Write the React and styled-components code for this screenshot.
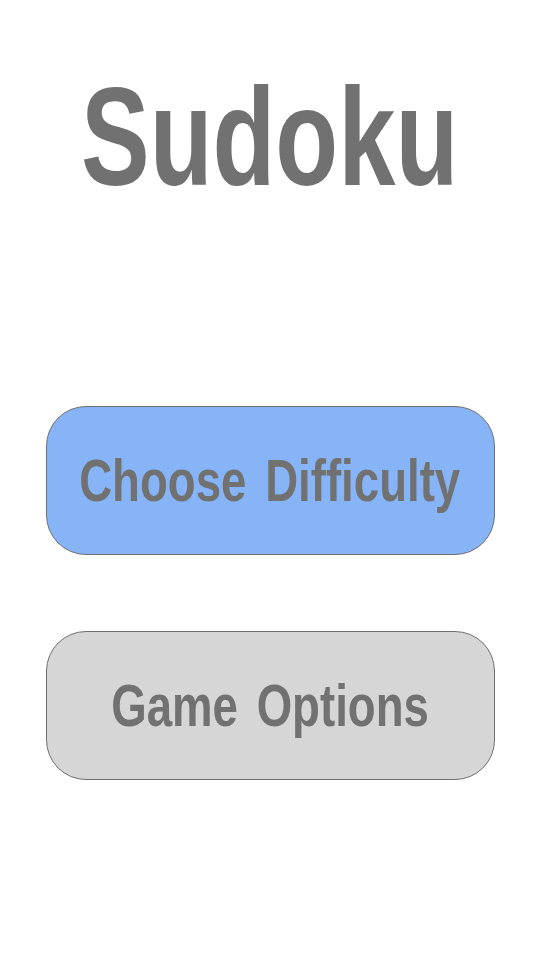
import React from 'react';
import styled, { createGlobalStyle } from 'styled-components';

const Global = createGlobalStyle`
    html, body {
        margin: 0;
        padding: 0;
        background: #ffffff;
    }
    body {
        font-family: "Liberation Sans", Arial, sans-serif;
    }
`

const Screen = styled.main`
    width: 540px;
    height: 960px;
    display: flex;
    flex-direction: column;
    align-items: center;
    box-sizing: border-box;
    padding-top: 62px;
`

// the reference uses a narrow face, so squeeze the regular one
const Narrow = styled.span`
    display: inline-block;
    white-space: nowrap;
    transform: scaleX(${props => props.squeeze || 0.76});
    transform-origin: center;
`

const Title = styled.h1`
    margin: 0;
    font-size: 140px;
    line-height: 150px;
    font-weight: 700;
    color: #717171;
`

const Menu = styled.nav`
    margin-top: 194px;
    display: flex;
    flex-direction: column;
    gap: 76px;
`

const MenuButton = styled.button`
    width: 449px;
    height: 149px;
    box-sizing: border-box;
    border: 1px solid #6f6f6f;
    border-radius: 40px;
    background: ${props => props.$primary ? '#86b4f6' : '#d6d6d6'};
    color: #717171;
    font-family: inherit;
    font-size: 60px;
    font-weight: 700;
    word-spacing: 8px;
    cursor: pointer;
    padding: 0;
    display: flex;
    align-items: center;
    justify-content: center;
`

export default () => (
    <Screen>
        <Global />
        <Title><Narrow squeeze={0.735}>Sudoku</Narrow></Title>
        <Menu>
            <MenuButton $primary><Narrow>Choose Difficulty</Narrow></MenuButton>
            <MenuButton><Narrow>Game Options</Narrow></MenuButton>
        </Menu>
    </Screen>
);
